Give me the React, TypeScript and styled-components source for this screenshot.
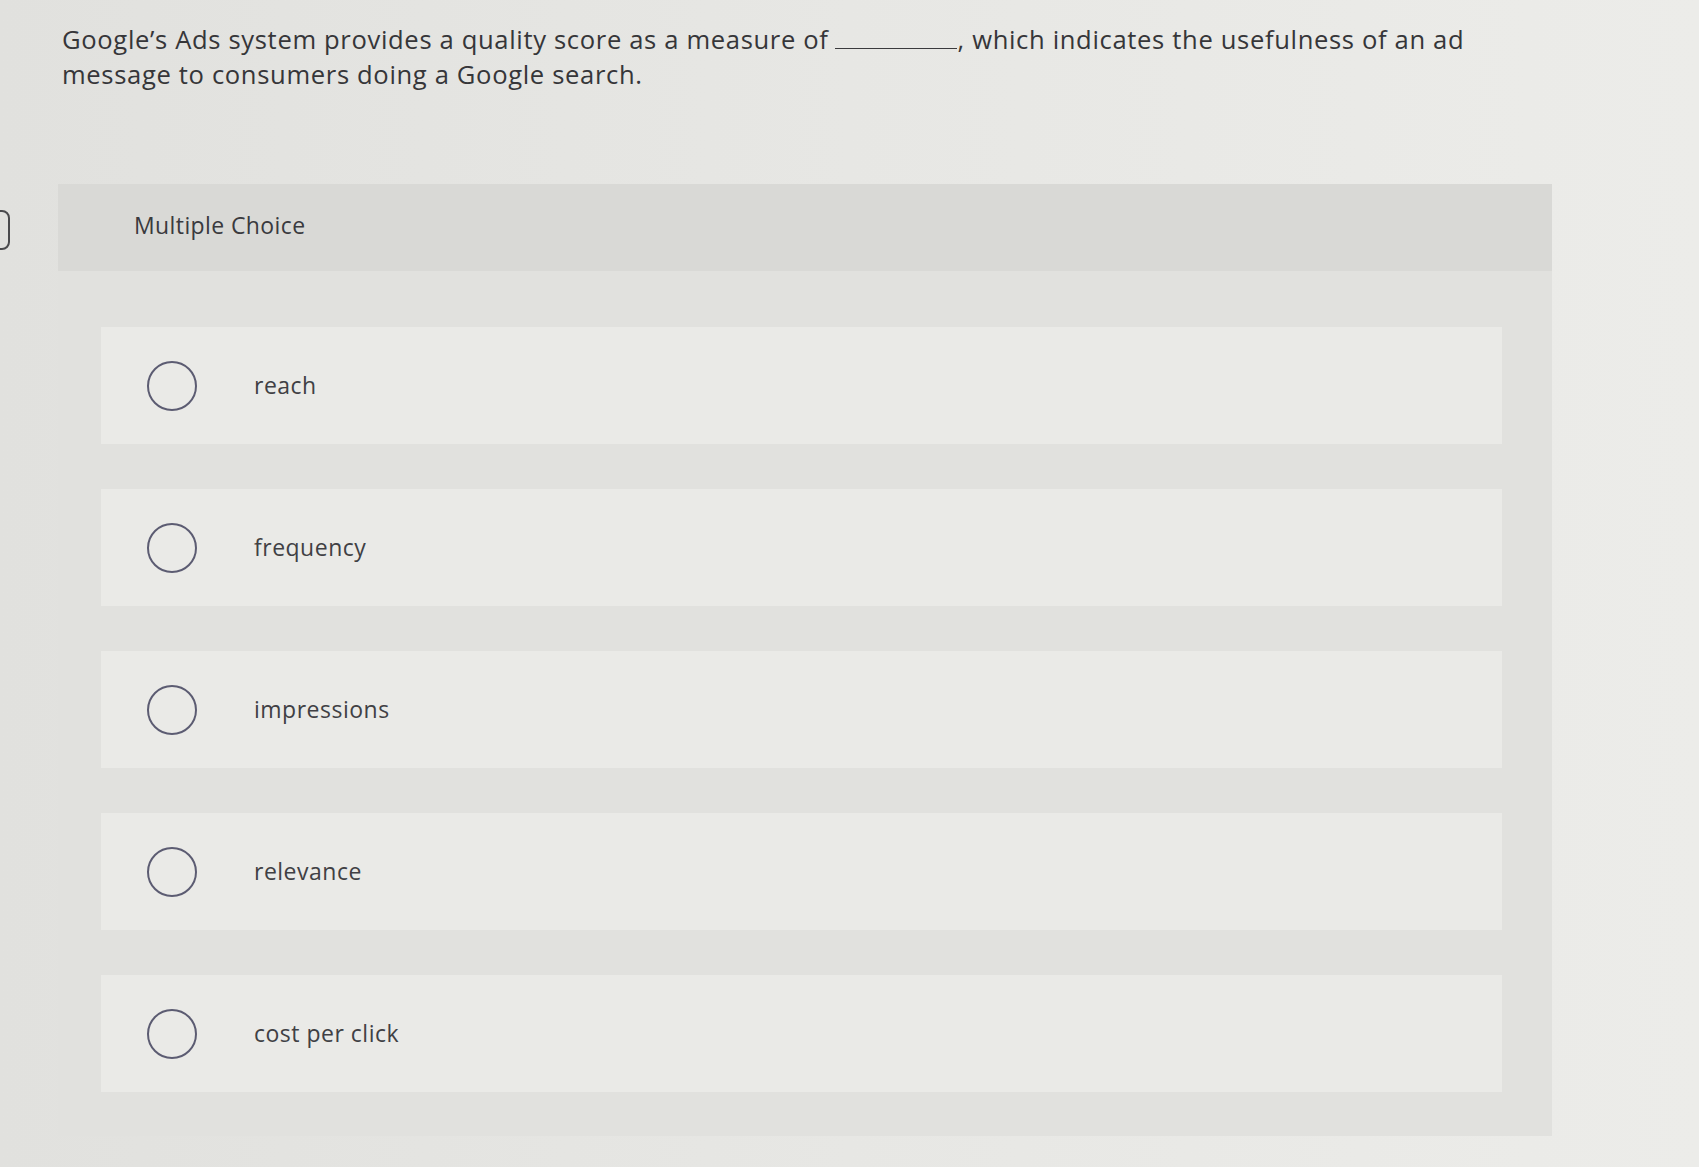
import React from 'react';
import styled, { createGlobalStyle } from 'styled-components';

const GlobalStyle = createGlobalStyle`
  html, body {
    margin: 0;
    padding: 0;
    background: #e6e6e3;
  }
  body {
    font-family: "Open Sans", "Liberation Sans", sans-serif;
    color: #38383b;
  }
`;

const Page = styled.div`
  position: relative;
  width: 1699px;
  height: 1167px;
  box-sizing: border-box;
  padding: 22px 0 0 62px;
  background: linear-gradient(90deg, #e1e1de 0%, #e7e7e4 50%, #ecece9 100%);
  overflow: hidden;
`;

const EdgeMark = styled.div`
  position: absolute;
  left: -10px;
  top: 210px;
  width: 16px;
  height: 36px;
  border: 2px solid #4a4a4d;
  border-radius: 8px;
`;

const Question = styled.p`
  margin: 0;
  width: 1440px;
  font-size: 25.6px;
  line-height: 35px;
  letter-spacing: 0.65px;
  color: #363639;
`;

const Blank = styled.span`
  display: inline-block;
  width: 122px;
  height: 20px;
  border-bottom: 1.5px solid #3a3a3d;
  margin: 0 1px 0 6px;
`;

const Panel = styled.section`
  margin-top: 92px;
  margin-left: -4px;
  width: 1494px;
  background: #e1e1de;
`;

const PanelHeader = styled.header`
  height: 87px;
  box-sizing: border-box;
  display: flex;
  align-items: center;
  padding: 0 0 6px 76px;
  background: #d9d9d6;
  font-size: 23px;
  letter-spacing: 0.4px;
  color: #3a3a3e;
`;

const Options = styled.div`
  display: flex;
  flex-direction: column;
  gap: 45px;
  padding: 56px 50px 44px 43px;
`;

const Option = styled.label`
  height: 117px;
  display: flex;
  align-items: center;
  padding-left: 46px;
  background: #eaeae7;
  cursor: pointer;
`;

const Radio = styled.span`
  width: 46px;
  height: 46px;
  border-radius: 50%;
  border: 2px solid #5c5c72;
  flex-shrink: 0;
`;

const OptionText = styled.span`
  margin-left: 57px;
  margin-bottom: 2px;
  font-size: 23px;
  letter-spacing: 0.5px;
  color: #404044;
`;

const choices = ['reach', 'frequency', 'impressions', 'relevance', 'cost per click'];

export default function App() {
  return (
    <>
      <GlobalStyle />
      <Page>
        <EdgeMark />
        <Question>
          Google’s Ads system provides a quality score as a measure of
          <Blank />, which indicates the usefulness of an ad
          <br />
          message to consumers doing a Google search.
        </Question>
        <Panel>
          <PanelHeader>Multiple Choice</PanelHeader>
          <Options>
            {choices.map(c => (
              <Option key={c}>
                <Radio />
                <OptionText>{c}</OptionText>
              </Option>
            ))}
          </Options>
        </Panel>
      </Page>
    </>
  );
}
